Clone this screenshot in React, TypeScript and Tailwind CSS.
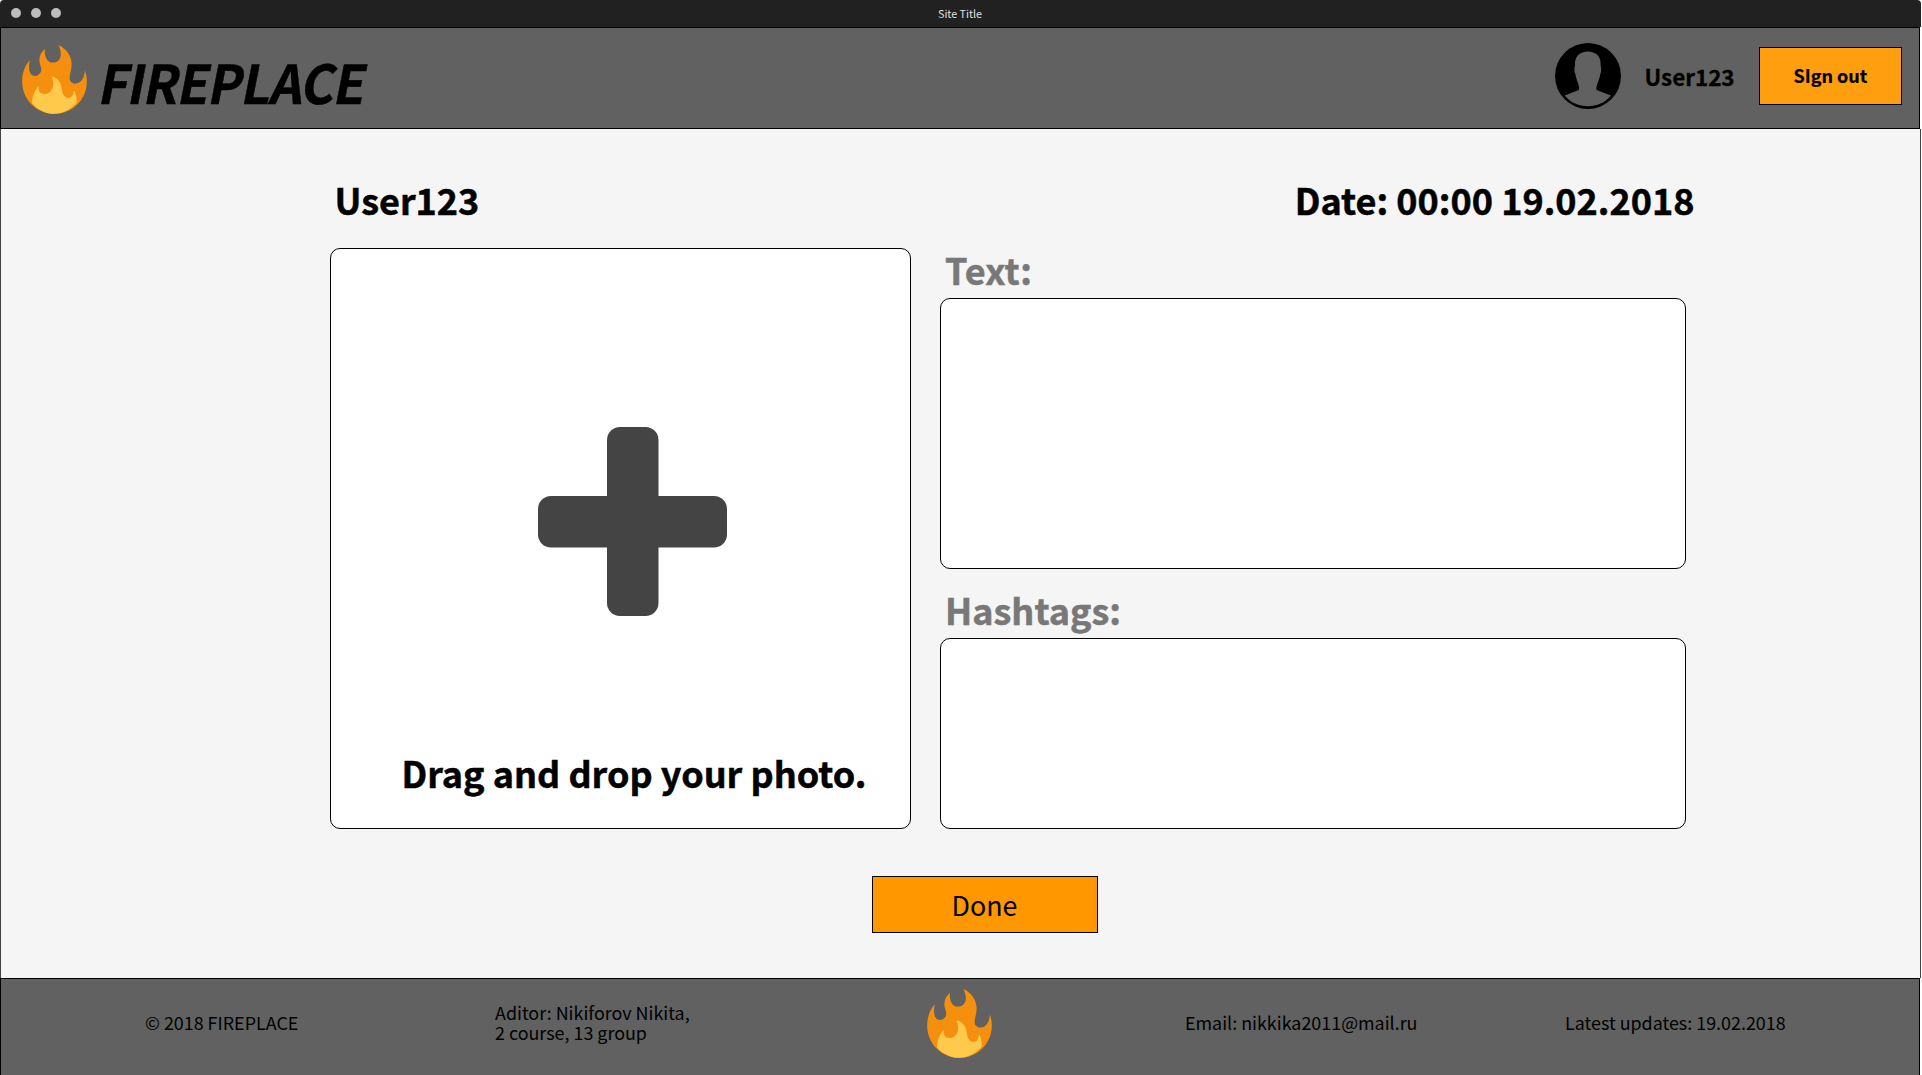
function Flame() {
  return (
    <svg viewBox="65.5 135 197 207.5" preserveAspectRatio="none" className="h-[69px] w-[65px] shrink-0">
      <path
        fill="#f5900e"
        d="M176 135C200 146 216 168 216 194C216 210 209 224 210 237C212 247 220 251 229 251C246 250 255 232 256 212C260 222 262 234 262 244C262 300 218 342 164 342C110 342 66 300 66 244C66 220 74 198 89 181C87 192 85 205 89 216C93 226 99 228 106 228C116 227 124 219 124 208C124 200 118 192 118 180C119 165 124 156 135 147C133 160 137 188 159 188C175 187 184 175 183 162C183 152 180 143 176 135Z"
      />
      <path
        fill="#ffca4b"
        d="M155 229C172 233 183 247 185 262C188 280 192 294 206 294C216 294 222 285 223 272C230 283 232 295 231 309C212 330 188 342 164 342C138 342 112 330 96 310C96 290 103 272 116 258C115 270 118 282 134 282C150 282 160 268 160 252C160 243 158 236 155 229Z"
      />
    </svg>
  );
}

function Avatar() {
  return (
    <svg viewBox="97 129 197 197" className="h-[66px] w-[66px] shrink-0">
      <circle cx="195.5" cy="227.5" r="98.5" fill="#000" />
      <path
        fill="#616161"
        d="M126 286L168 269C172 255 160 240 158 222C154 215 154 202 157 196C154 168 172 154 195 154C218 154 236 168 233 196C236 202 236 215 232 222C230 240 218 255 221 269L264 286C246 308 222 318 195 318C168 318 144 308 126 286Z"
      />
    </svg>
  );
}

function Plus() {
  return (
    <svg viewBox="0 0 189 189" className="h-[189px] w-[189px]" fill="#444">
      <rect x="69" y="0" width="51.5" height="189" rx="13" />
      <rect x="0" y="69" width="189" height="51.5" rx="13" />
    </svg>
  );
}

export default function App() {
  return (
    <div className="flex h-[1075px] w-[1921px] flex-col overflow-hidden bg-white font-['Noto_Sans_CJK_SC',sans-serif] whitespace-nowrap text-black">
      <div className="flex h-[27px] shrink-0 items-start rounded-t-[4px] bg-[#212121] pl-[11px]">
        <div className="mt-[8px] flex w-[927px] gap-[10px]">
          <span className="size-[10px] rounded-full bg-[#bdbdbd]" />
          <span className="size-[10px] rounded-full bg-[#bdbdbd]" />
          <span className="size-[10px] rounded-full bg-[#bdbdbd]" />
        </div>
        <span className="text-[10.75px] leading-[27px] text-[#e0e0e0]">Site Title</span>
      </div>

      <header className="mr-px flex h-[102px] shrink-0 items-start border border-black bg-[#616161] pl-[21px]">
        <div className="mt-[17px]">
          <Flame />
        </div>
        <h1 className="mt-[21px] ml-[7.5px] w-[1460px] text-[53.4px] leading-[64px] font-bold">
          <span className="inline-block origin-bottom-left [transform:skewX(-11deg)_scaleX(0.96)] tracking-[-1px] [-webkit-text-stroke:0.5px_black]">
            FIREPLACE
          </span>
        </h1>
        <div className="mt-[15px]">
          <Avatar />
        </div>
        <span className="mt-[30px] ml-[24px] w-[114.5px] text-[22.4px] leading-[36px] font-bold [-webkit-text-stroke:0.3px_black]">
          User123
        </span>
        <button className="mt-[19px] flex h-[58px] w-[143px] items-start justify-center border border-black bg-[#ff9e0f] pt-[14px] text-[18px] leading-[26px] font-bold [-webkit-text-stroke:0.2px_black]">
          SIgn out
        </button>
      </header>

      <main className="h-[849px] shrink-0 border-x border-[#444] bg-[#f5f5f5] pt-[46px] pl-[329px]">
        <div className="flex h-[48px] w-[1364px] justify-between pl-[4.5px] text-[36px] leading-[48px] font-bold [-webkit-text-stroke:0.5px_black]">
          <h2>User123</h2>
          <p className="-mr-[0.5px]">Date: 00:00 19.02.2018</p>
        </div>
        <div className="mt-[25px] flex gap-[29px]">
          <section className="flex h-[581px] w-[581px] flex-col rounded-[10px] border border-black bg-white pt-[178px]">
            <div className="pl-[207px]">
              <Plus />
            </div>
            <p className="mt-[132px] pl-[70.5px] text-[36px] leading-[48px] font-bold [-webkit-text-stroke:0.5px_black]">
              Drag and drop your photo.
            </p>
          </section>
          <section className="w-[746px]">
            <h3 className="mt-px pl-[5px] text-[36px] leading-[40px] font-bold tracking-[0.2px] text-[#787878] [-webkit-text-stroke:0.5px_#787878]">
              Text:
            </h3>
            <div className="mt-[9px] h-[271px] rounded-[10px] border border-black bg-white" />
            <h3 className="mt-[20px] pl-[5px] text-[36px] leading-[40px] font-bold text-[#787878] [-webkit-text-stroke:0.5px_#787878]">
              Hashtags:
            </h3>
            <div className="mt-[9px] h-[191px] rounded-[10px] border border-black bg-white" />
          </section>
        </div>
        <button className="mt-[47px] ml-[542px] block h-[57px] w-[226px] border border-black bg-[#ff9800] pr-px text-[26.8px] leading-[55px]">
          Done
        </button>
      </main>

      <footer className="mr-px flex h-[98px] shrink-0 items-start border border-black bg-[#616161] pl-[144px] text-[17.9px] leading-[20px]">
        <p className="mt-[33px] w-[350px]">© 2018 FIREPLACE</p>
        <p className="mt-[23px] w-[432px]">
          Aditor: Nikiforov Nikita,
          <br />2 course, 13 group
        </p>
        <div className="mt-[10px] w-[258px]">
          <Flame />
        </div>
        <p className="mt-[33px] w-[380px]">Email: nikkika2011@mail.ru</p>
        <p className="mt-[33px]">Latest updates: 19.02.2018</p>
      </footer>
    </div>
  );
}
